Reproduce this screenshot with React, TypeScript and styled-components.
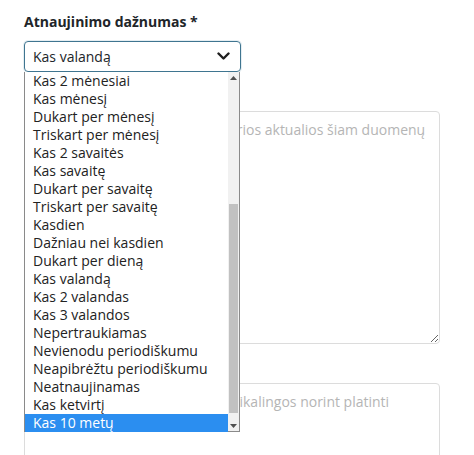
import styled, { createGlobalStyle } from 'styled-components';

const GlobalStyle = createGlobalStyle`
  body {
    margin: 0;
    background: #ffffff;
    font-family: 'Open Sans', 'Noto Sans', sans-serif;
    color: #212529;
  }
`;

const Page = styled.div`
  width: 440px;
  padding: 12px 0 0 24px;
  height: 455px;
  overflow: hidden;
  box-sizing: border-box;
`;

const Field = styled.div`
  display: flex;
  flex-direction: column;
  margin-bottom: 10px;
`;

const Label = styled.label`
  font-size: 14px;
  line-height: 20px;
  font-weight: 700;
  color: #212529;
  margin-bottom: 9px;
`;

const SelectWrap = styled.div`
  position: relative;
  width: 217px;
`;

const SelectBox = styled.div`
  height: 31px;
  box-sizing: border-box;
  border: 1px solid #3f7590;
  border-radius: 4px;
  box-shadow: 0 0 0 1px rgba(80, 140, 170, 0.15);
  display: flex;
  align-items: center;
  justify-content: space-between;
  padding: 0 10px 0 8px;
  font-size: 14px;
  color: #212529;
`;

const DropList = styled.div`
  position: absolute;
  top: 31px;
  left: 0;
  width: 216px;
  height: 360px;
  box-sizing: border-box;
  border: 1px solid #8a8a8a;
  border-top: none;
  background: #ffffff;
  display: flex;
  z-index: 5;
`;

const Options = styled.div`
  flex: 1;
  display: flex;
  flex-direction: column;
`;

const Option = styled.div<{ $selected?: boolean }>`
  height: 18px;
  line-height: 18px;
  font-size: 14px;
  padding-left: 8px;
  white-space: nowrap;
  color: ${(p) => (p.$selected ? '#ffffff' : '#222222')};
  background: ${(p) => (p.$selected ? '#2b8ef0' : 'transparent')};
`;

const ScrollTrack = styled.div`
  width: 11px;
  background: #f1f1f1;
  display: flex;
  flex-direction: column;
  align-items: center;
`;

const ScrollArrow = styled.div<{ $down?: boolean }>`
  height: 11px;
  width: 11px;
  display: flex;
  align-items: center;
  justify-content: center;
  svg {
    transform: ${(p) => (p.$down ? 'rotate(180deg)' : 'none')};
  }
`;

const ScrollSpace = styled.div`
  flex: 1;
  width: 100%;
  display: flex;
  flex-direction: column;
  justify-content: flex-end;
  padding-bottom: 7px;
  box-sizing: border-box;
`;

const ScrollThumb = styled.div`
  height: 209px;
  margin: 0 1px;
  background: #c1c1c1;
`;

const TextArea = styled.textarea<{ $height: number }>`
  height: ${(p) => p.$height}px;
  box-sizing: border-box;
  border: 1px solid #dcdcdc;
  border-radius: 4px;
  padding: 8px 9px;
  font-family: 'Open Sans', 'Noto Sans', sans-serif;
  font-size: 14px;
  line-height: 20px;
  resize: vertical;
  &::placeholder {
    color: #b5b5b5;
  }
`;

const options = [
  'Kas 2 mėnesiai',
  'Kas mėnesį',
  'Dukart per mėnesį',
  'Triskart per mėnesį',
  'Kas 2 savaitės',
  'Kas savaitę',
  'Dukart per savaitę',
  'Triskart per savaitę',
  'Kasdien',
  'Dažniau nei kasdien',
  'Dukart per dieną',
  'Kas valandą',
  'Kas 2 valandas',
  'Kas 3 valandos',
  'Nepertraukiamas',
  'Nevienodu periodiškumu',
  'Neapibrėžtu periodiškumu',
  'Neatnaujinamas',
  'Kas ketvirtį',
  'Kas 10 metų',
];

function Chevron() {
  return (
    <svg width="13" height="9" viewBox="0 0 13 9">
      <path d="M1.5 1.5 L6.5 6.5 L11.5 1.5" fill="none" stroke="#1f1f1f" strokeWidth="2.4" strokeLinecap="round" strokeLinejoin="round" />
    </svg>
  );
}

function Triangle() {
  return (
    <svg width="7" height="4" viewBox="0 0 7 4">
      <path d="M0 4 L3.5 0 L7 4 Z" fill="#505050" />
    </svg>
  );
}

export default function App() {
  return (
    <>
      <GlobalStyle />
      <Page>
        <Field>
          <Label>Atnaujinimo dažnumas *</Label>
          <SelectWrap>
            <SelectBox>
              <span>Kas valandą</span>
              <Chevron />
            </SelectBox>
            <DropList>
              <Options>
                {options.map((o) => (
                  <Option key={o} $selected={o === 'Kas 10 metų'}>
                    {o}
                  </Option>
                ))}
              </Options>
              <ScrollTrack>
                <ScrollArrow>
                  <Triangle />
                </ScrollArrow>
                <ScrollSpace>
                  <ScrollThumb />
                </ScrollSpace>
                <ScrollArrow $down>
                  <Triangle />
                </ScrollArrow>
              </ScrollTrack>
            </DropList>
          </SelectWrap>
        </Field>
        <Field>
          <Label>Sąlygos</Label>
          <TextArea
            $height={233}
            placeholder="Įrašykite naudojimo sąlygas, kurios aktualios šiam duomenų rinkiniui"
          />
        </Field>
        <Field>
          <Label>Platinimo sąlygos</Label>
          <TextArea
            $height={120}
            placeholder="Nurodykite nuostatas, kurios reikalingos norint platinti duomenis"
          />
        </Field>
      </Page>
    </>
  );
}
